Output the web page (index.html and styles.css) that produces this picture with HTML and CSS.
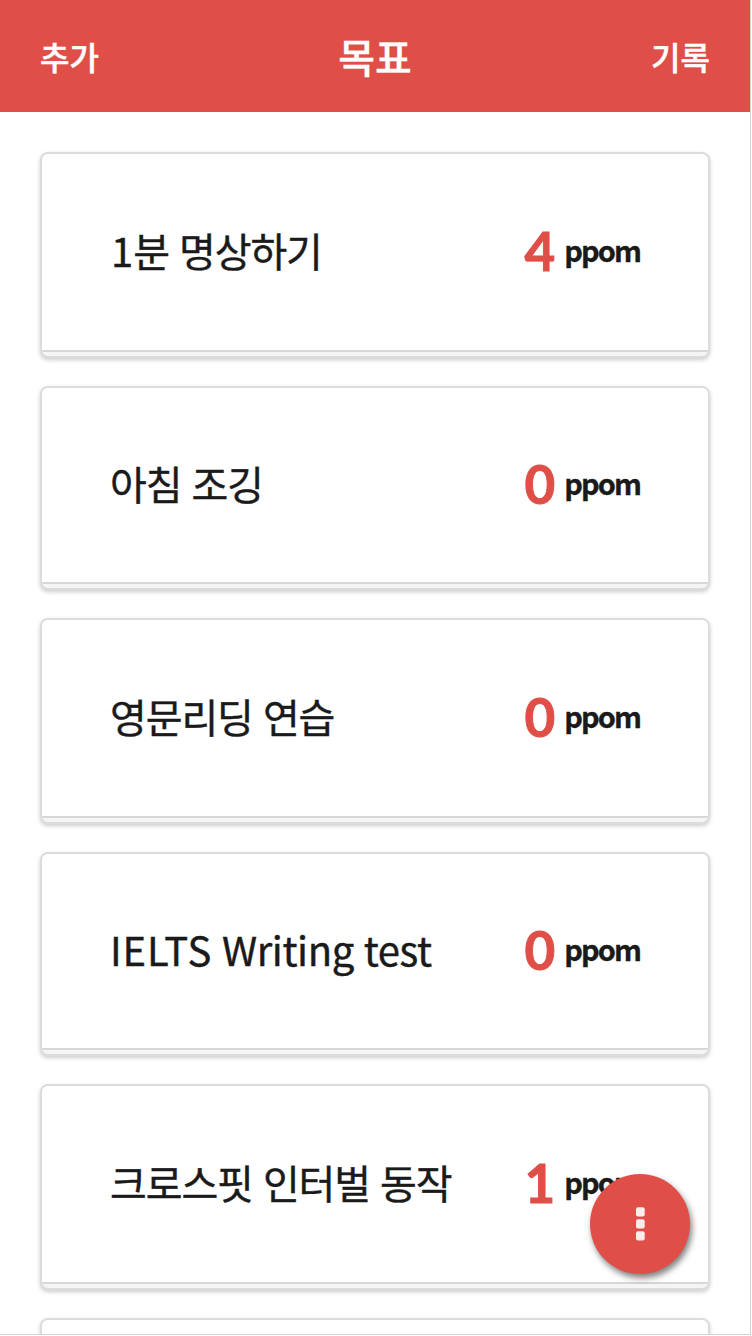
FILE: index.html
```html
<!DOCTYPE html>
<html lang="ko">
<head>
<meta charset="utf-8">
<title>목표</title>
<link rel="stylesheet" href="styles.css">
</head>
<body>
<div class="app">
<header class="bar"><span class="action">추가</span><h1 class="title">목표</h1><span class="action">기록</span></header>
<main class="list">
<article class="card"><div class="face"><span class="name"><span class="digit">1</span>분 명상하기</span><span class="score"><b class="count">4</b><span class="unit">ppom</span></span></div></article>
<article class="card short"><div class="face"><span class="name">아침 조깅</span><span class="score"><b class="count">0</b><span class="unit">ppom</span></span></div></article>
<article class="card"><div class="face"><span class="name">영문리딩 연습</span><span class="score"><b class="count">0</b><span class="unit">ppom</span></span></div></article>
<article class="card short"><div class="face"><span class="name latin"><span class="caps">IELTS</span> Writing test</span><span class="score"><b class="count">0</b><span class="unit">ppom</span></span></div></article>
<article class="card"><div class="face"><span class="name">크로스핏 인터벌 동작</span><span class="score"><b class="count">1</b><span class="unit">ppom</span></span></div></article>
<article class="card"><div class="face"></div></article>
</main>
<button class="fab" aria-label="메뉴"><svg width="10" height="34" viewBox="0 0 10 34" fill="#fdeceb"><rect x="1" y="0.3" width="8.7" height="9.2" rx="2"/><rect x="1" y="12.3" width="8.7" height="9.2" rx="2"/><rect x="1" y="24.3" width="8.7" height="9.2" rx="2"/></svg></button>
</div>
</body>
</html>
```
FILE: styles.css
```css
* { box-sizing: border-box; }
body { margin: 0; background: #fff; font-family: "Noto Sans CJK KR", sans-serif; color: #1a1a1a; }
.app { position: relative; width: 751px; height: 1335px; overflow: hidden; border-right: 1px solid #d4d4d4; border-bottom: 1px solid #d4d4d4; }
.bar { height: 112px; padding: 0 40px; display: flex; align-items: center; justify-content: space-between; background: #df4f48; color: #fff; }
.action { font-size: 32px; font-weight: 500; line-height: 48px; -webkit-text-stroke: 0.5px currentColor; }
.title { margin: 0; font-size: 40px; font-weight: 500; line-height: 60px; -webkit-text-stroke: 0.3px currentColor; }
.list { padding: 40px 40px 0; display: flex; flex-direction: column; gap: 28px; }
.card { height: 206px; flex: none; border: 2px solid #dcdcdc; border-radius: 8px; background: #f5f5f5; box-shadow: 0 2px 4px rgba(0,0,0,.2); overflow: hidden; }
.card.short { height: 204px; }
.face { height: calc(100% - 4px); padding: 0 68px 5px; display: flex; align-items: center; justify-content: space-between; background: #fff; border-bottom: 2px solid #d7d7d7; }
.name { font-size: 40px; line-height: 60px; letter-spacing: -1.1px; -webkit-text-stroke: 0.4px currentColor; }
.digit { margin-left: 1px; letter-spacing: 0; }
.name.latin { letter-spacing: -0.4px; word-spacing: -1px; padding-top: 1px; }
.caps { letter-spacing: 0.9px; }
.score { display: flex; align-items: center; gap: 9px; }
.count { font-family: Lato, sans-serif; font-size: 53px; font-weight: 700; line-height: 76px; padding-top: 2px; color: #df4f48; -webkit-text-stroke: 0.9px currentColor; }
.unit { font-size: 29px; font-weight: 700; line-height: 42px; letter-spacing: -1.9px; padding-bottom: 2px; -webkit-text-stroke: 0.3px currentColor; }
.fab { position: absolute; left: 590px; top: 1174px; width: 100px; height: 100px; padding: 0; border: 0; border-radius: 50%; display: flex; align-items: center; justify-content: center; background: #df4f48; box-shadow: 2px 4px 6px rgba(0,0,0,.5); }
```
